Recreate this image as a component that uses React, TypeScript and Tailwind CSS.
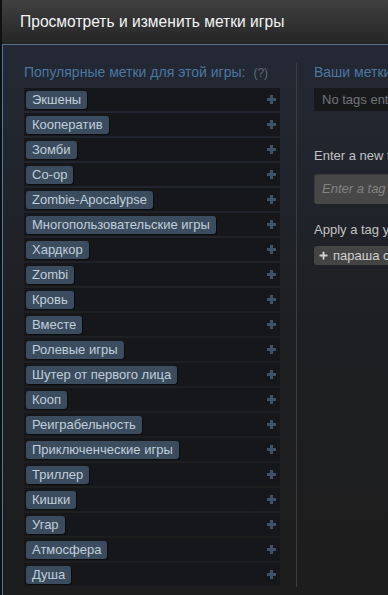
import { Plus } from "lucide-react";

const popularTags = [
  "Экшены",
  "Кооператив",
  "Зомби",
  "Co-op",
  "Zombie-Apocalypse",
  "Многопользовательские игры",
  "Хардкор",
  "Zombi",
  "Кровь",
  "Вместе",
  "Ролевые игры",
  "Шутер от первого лица",
  "Кооп",
  "Реиграбельность",
  "Приключенческие игры",
  "Триллер",
  "Кишки",
  "Угар",
  "Атмосфера",
  "Душа",
];

const PlusMark = ({ className }: { className: string }) => (
  <svg width="9" height="9" viewBox="0 0 9 9" className={className}>
    <rect x="3" y="0" width="3" height="9" fill="currentColor" />
    <rect x="0" y="3" width="9" height="3" fill="currentColor" />
  </svg>
);

const TagRow = ({ name }: { name: string }) => (
  <div className="flex h-[23px] items-center justify-between bg-[#16171a] pl-[2px] pr-[4px]">
    <span className="flex h-[18px] items-center rounded-[3px] bg-[#3b4c5e] px-[6px] text-[13px] leading-none text-[#c0cedb] shadow-[1px_1px_0_#0b0c0e]">
      {name}
    </span>
    <PlusMark className="text-[#3e5368]" />
  </div>
);

export default function App() {
  return (
    <div className="flex h-[595px] w-[388px] overflow-hidden bg-[#101010] pl-[2px] font-['Liberation_Sans',Arial,sans-serif]">
      <div className="flex w-[600px] shrink-0 flex-col">
        <div className="flex h-[44px] shrink-0 items-center bg-gradient-to-b from-[#404040] to-[#252525] pl-[18px] text-[15.6px] text-[#f2f4f6]">
          Просмотреть и изменить метки игры
        </div>
        <div className="h-px shrink-0 bg-[#5a6f86]" />
        <div className="flex flex-1 border-l border-[#4a79a8] bg-gradient-to-b from-[#232935] via-[#1e1f22] via-50% to-[#1d1d1d] pt-[18px]">
          <div className="flex w-[293px] flex-col pl-[21px] pr-[16px]">
            <div className="flex h-[25px] items-start text-[14px] leading-[18px] text-[#4c77a1]">
              Популярные метки для этой игры:
              <span className="ml-[8px] mt-px text-[12px] text-[#5f6a76]">(?)</span>
            </div>
            <div className="flex flex-col gap-[2px]">
              {popularTags.map((t) => (
                <TagRow key={t} name={t} />
              ))}
            </div>
          </div>
          <div className="mb-[8px] w-px bg-[#3c3c3c]" />
          <div className="flex flex-1 flex-col pl-[17px]">
            <div className="h-[25px] text-[14px] leading-[18px] text-[#4c77a1]">Ваши метки для этой игры</div>
            <div className="flex h-[23px] items-center bg-[#18191b] pl-[8px] text-[13px] text-[#6f757c]">
              No tags entered
            </div>
            <div className="mt-[35px] text-[13px] text-[#c2c2c2]">Enter a new tag</div>
            <div className="mt-[8px] flex h-[30px] items-center rounded-[3px] bg-[#474747] pl-[8px] text-[13px] italic text-[#838383] shadow-[inset_1px_1px_0_#3a3a3a]">
              Enter a tag
            </div>
            <div className="mt-[16px] text-[13px] text-[#c2c2c2]">Apply a tag you've used before</div>
            <div className="mt-[7px] flex">
              <span className="flex h-[19px] items-center gap-[4px] rounded-[3px] bg-[#444444] px-[4px] text-[13px] text-[#d0d0d0]">
                <Plus size={11} strokeWidth={4} className="text-[#d0d0d0]" />
                параша с дерьмом
              </span>
            </div>
          </div>
        </div>
      </div>
    </div>
  );
}
